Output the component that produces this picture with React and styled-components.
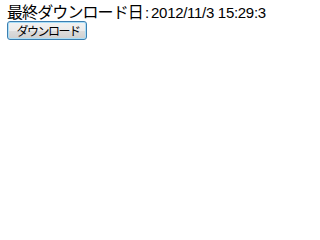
import React from "react";
import styled, { createGlobalStyle } from "styled-components";

const Global = createGlobalStyle`
  html, body { margin: 0; padding: 0; background: #fff; }
  body { font-family: "Liberation Sans", "Noto Sans CJK JP", sans-serif; color: #000; }
`;

const Page = styled.div`
  display: flex;
  flex-direction: column;
  align-items: flex-start;
  gap: 2px;
  padding: 0 7px;
`;

const Info = styled.div`
  display: flex;
  align-items: baseline;
  height: 19px;
  white-space: nowrap;
`;

const Label = styled.span`
  font-family: "Noto Sans CJK JP", sans-serif;
  font-size: 16px;
  line-height: 23px;
  letter-spacing: -0.9px;
`;

const Sep = styled.span`
  font-family: "Liberation Sans", sans-serif;
  font-size: 15px;
  line-height: 19px;
  margin: 0 2px;
`;

const Value = styled.span`
  font-family: "Liberation Sans", sans-serif;
  font-size: 15px;
  line-height: 19px;
  letter-spacing: -0.3px;
`;

const Button = styled.button`
  width: 80px;
  height: 19px;
  padding: 0 0 0 2px;
  border: 1px solid #3c7fb1;
  border-radius: 3px;
  box-shadow: inset 0 0 0 1px #a9def8;
  background: linear-gradient(#f2f2f2 0%, #ebebeb 50%, #dddddd 50%, #cfcfcf 100%);
  font-family: "Noto Sans CJK JP", sans-serif;
  font-size: 12px;
  line-height: 15px;
  letter-spacing: -1.5px;
  color: #000;
`;

export default function App() {
  return (
    <>
      <Global />
      <Page>
        <Info>
          <Label>最終ダウンロード日</Label>
          <Sep>:</Sep>
          <Value>2012/11/3 15:29:3</Value>
        </Info>
        <Button type="button">ダウンロード</Button>
      </Page>
    </>
  );
}
